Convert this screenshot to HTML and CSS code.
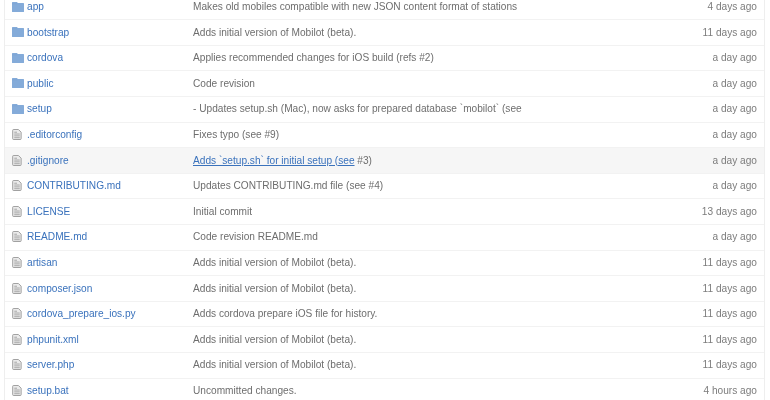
FILE: index.html

```html
<!DOCTYPE html>
<html lang="en">
<head>
  <meta charset="UTF-8" />
  <meta name="viewport" content="width=device-width, initial-scale=1.0"/>
  <title>Files</title>
  <link rel="stylesheet" href="styles.css">
</head>
<body>

<svg class="defs" width="0" height="0">
  <symbol id="folder" viewBox="0 0 12 10">
    <path fill="#84abd9" d="M.6 0h4.2c.4 0 .6.2.7.5l.2.5h5.7c.3 0 .6.3.6.6v7.8c0 .3-.3.6-.6.6H.6c-.3 0-.6-.3-.6-.6V.6C0 .3.3 0 .6 0z"/>
    <path fill="#7aa3d2" d="M0 1.6h5.4v.6H0z"/>
  </symbol>
  <symbol id="file" viewBox="0 0 10 12">
    <path fill="#ebebeb" stroke="#969696" d="M1.3.5h5.2l3 3v7a1 1 0 0 1-1 1H1.3a1 1 0 0 1-1-1v-9a1 1 0 0 1 1-1z"/>
    <path fill="none" stroke="#a0a0a0" d="M2 3.5h3M2 5.5h6M2 7.5h6M2 9.5h6"/>
  </symbol>
</svg>

<div class="files">
  <div class="row">
    <span class="cell-icon"><svg class="icon dir"><use href="#folder"/></svg></span>
    <a class="name" href="#">app</a>
    <span class="msg">Makes old mobiles compatible with new JSON content format of stations</span>
    <span class="age">4 days ago</span>
  </div>
  <div class="row">
    <span class="cell-icon"><svg class="icon dir"><use href="#folder"/></svg></span>
    <a class="name" href="#">bootstrap</a>
    <span class="msg">Adds initial version of Mobilot (beta).</span>
    <span class="age">11 days ago</span>
  </div>
  <div class="row">
    <span class="cell-icon"><svg class="icon dir"><use href="#folder"/></svg></span>
    <a class="name" href="#">cordova</a>
    <span class="msg">Applies recommended changes for iOS build (refs #2)</span>
    <span class="age">a day ago</span>
  </div>
  <div class="row">
    <span class="cell-icon"><svg class="icon dir"><use href="#folder"/></svg></span>
    <a class="name" href="#">public</a>
    <span class="msg">Code revision</span>
    <span class="age">a day ago</span>
  </div>
  <div class="row">
    <span class="cell-icon"><svg class="icon dir"><use href="#folder"/></svg></span>
    <a class="name" href="#">setup</a>
    <span class="msg">- Updates setup.sh (Mac), now asks for prepared database `mobilot` (see</span>
    <span class="age">a day ago</span>
  </div>
  <div class="row">
    <span class="cell-icon"><svg class="icon doc"><use href="#file"/></svg></span>
    <a class="name" href="#">.editorconfig</a>
    <span class="msg">Fixes typo (see #9)</span>
    <span class="age">a day ago</span>
  </div>
  <div class="row hover">
    <span class="cell-icon"><svg class="icon doc"><use href="#file"/></svg></span>
    <a class="name" href="#">.gitignore</a>
    <span class="msg"><a class="commit" href="#">Adds `setup.sh` for initial setup (see</a> #3)</span>
    <span class="age">a day ago</span>
  </div>
  <div class="row">
    <span class="cell-icon"><svg class="icon doc"><use href="#file"/></svg></span>
    <a class="name" href="#">CONTRIBUTING.md</a>
    <span class="msg">Updates CONTRIBUTING.md file (see #4)</span>
    <span class="age">a day ago</span>
  </div>
  <div class="row">
    <span class="cell-icon"><svg class="icon doc"><use href="#file"/></svg></span>
    <a class="name" href="#">LICENSE</a>
    <span class="msg">Initial commit</span>
    <span class="age">13 days ago</span>
  </div>
  <div class="row">
    <span class="cell-icon"><svg class="icon doc"><use href="#file"/></svg></span>
    <a class="name" href="#">README.md</a>
    <span class="msg">Code revision README.md</span>
    <span class="age">a day ago</span>
  </div>
  <div class="row">
    <span class="cell-icon"><svg class="icon doc"><use href="#file"/></svg></span>
    <a class="name" href="#">artisan</a>
    <span class="msg">Adds initial version of Mobilot (beta).</span>
    <span class="age">11 days ago</span>
  </div>
  <div class="row">
    <span class="cell-icon"><svg class="icon doc"><use href="#file"/></svg></span>
    <a class="name" href="#">composer.json</a>
    <span class="msg">Adds initial version of Mobilot (beta).</span>
    <span class="age">11 days ago</span>
  </div>
  <div class="row">
    <span class="cell-icon"><svg class="icon doc"><use href="#file"/></svg></span>
    <a class="name" href="#">cordova_prepare_ios.py</a>
    <span class="msg">Adds cordova prepare iOS file for history.</span>
    <span class="age">11 days ago</span>
  </div>
  <div class="row">
    <span class="cell-icon"><svg class="icon doc"><use href="#file"/></svg></span>
    <a class="name" href="#">phpunit.xml</a>
    <span class="msg">Adds initial version of Mobilot (beta).</span>
    <span class="age">11 days ago</span>
  </div>
  <div class="row">
    <span class="cell-icon"><svg class="icon doc"><use href="#file"/></svg></span>
    <a class="name" href="#">server.php</a>
    <span class="msg">Adds initial version of Mobilot (beta).</span>
    <span class="age">11 days ago</span>
  </div>
  <div class="row">
    <span class="cell-icon"><svg class="icon doc"><use href="#file"/></svg></span>
    <a class="name" href="#">setup.bat</a>
    <span class="msg">Uncommitted changes.</span>
    <span class="age">4 hours ago</span>
  </div>
</div>

</body>
</html>
```

FILE: styles.css

```css
html, body { height: 100%; overflow: hidden; }
body { margin: 0; background: #fff; font-family: "Liberation Sans", Arial, sans-serif; font-size: 10.15px; color: #6e6e6e; }
.defs { display: block; height: 0; }
.files { margin: -5.3px 5px 0 4px; border-left: 1px solid #eee; border-right: 1px solid #eee; filter: blur(0.25px); }
.row { display: flex; align-items: center; height: 25.6px; box-sizing: border-box; padding-bottom: 1px; border-bottom: 1px solid #f2f2f2; }
.row.hover { background: #f6f6f6; }
.cell-icon { flex: none; display: flex; width: 22px; padding-left: 7px; box-sizing: border-box; }
.icon { display: block; }
.icon.dir { width: 12px; height: 10px; }
.icon.doc { width: 10px; height: 11px; }
.name { flex: none; width: 166px; color: #3a72bc; text-decoration: none; }
.msg { flex: 1; min-width: 0; white-space: nowrap; }
.commit { color: #3a72bc; text-decoration: underline; }
.age { flex: none; margin-right: 7px; color: #7c7c7c; text-align: right; }
```
